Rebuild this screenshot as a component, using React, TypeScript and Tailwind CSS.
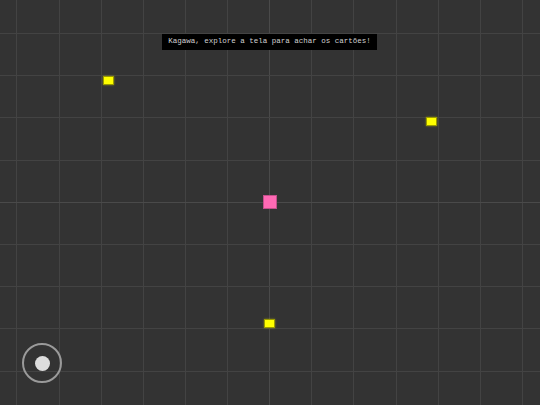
import React from 'react';

const xs = [16, 59, 101, 143, 185, 227, 269, 311, 353, 396, 438, 480, 522];
const ys = [33, 75, 117, 160, 202, 244, 286, 328, 371];

const targets = [
  { x: 103, y: 76 },
  { x: 426, y: 117 },
  { x: 264, y: 319 },
];

export default function App() {
  return (
    <div className="relative w-[540px] h-[405px] overflow-hidden bg-[#333333]">
      {/* world grid */}
      <svg className="absolute inset-0" width={540} height={405} shapeRendering="crispEdges">
        {xs.map((x) => (
          <rect key={'v' + x} x={x} y={0} width={1} height={405} fill={x === 269 ? '#4a4a4a' : '#434343'} />
        ))}
        {ys.map((y) => (
          <rect key={'h' + y} x={0} y={y} width={540} height={1} fill={y === 202 ? '#4a4a4a' : '#434343'} />
        ))}
      </svg>

      {/* cards */}
      {targets.map((t) => (
        <div
          key={t.x}
          className="absolute w-[11px] h-[9px] bg-[#ffff00] border border-[#9a9a00] shadow-[0_0_2px_rgba(255,255,0,0.4)]"
          style={{ left: t.x, top: t.y }}
        />
      ))}

      {/* player */}
      <div className="absolute left-[263px] top-[195px] w-[14px] h-[14px] bg-[#ff69b4] border border-[#c0508a]" />

      {/* hint */}
      <div className="absolute left-[162px] top-[34px] w-[215px] h-[16px] bg-black flex items-center justify-center">
        <span className="text-[7.5px] leading-none text-[#d0d0d0] font-[family-name:'Liberation_Mono',monospace] whitespace-nowrap">
          Kagawa, explore a tela para achar os cartões!
        </span>
      </div>

      {/* joystick */}
      <div className="absolute left-[22px] top-[343px] w-[40px] h-[40px] rounded-full border-2 border-[#9a9a9a] flex items-center justify-center">
        <div className="w-[15px] h-[15px] rounded-full bg-[#dddddd]" />
      </div>
    </div>
  );
}
